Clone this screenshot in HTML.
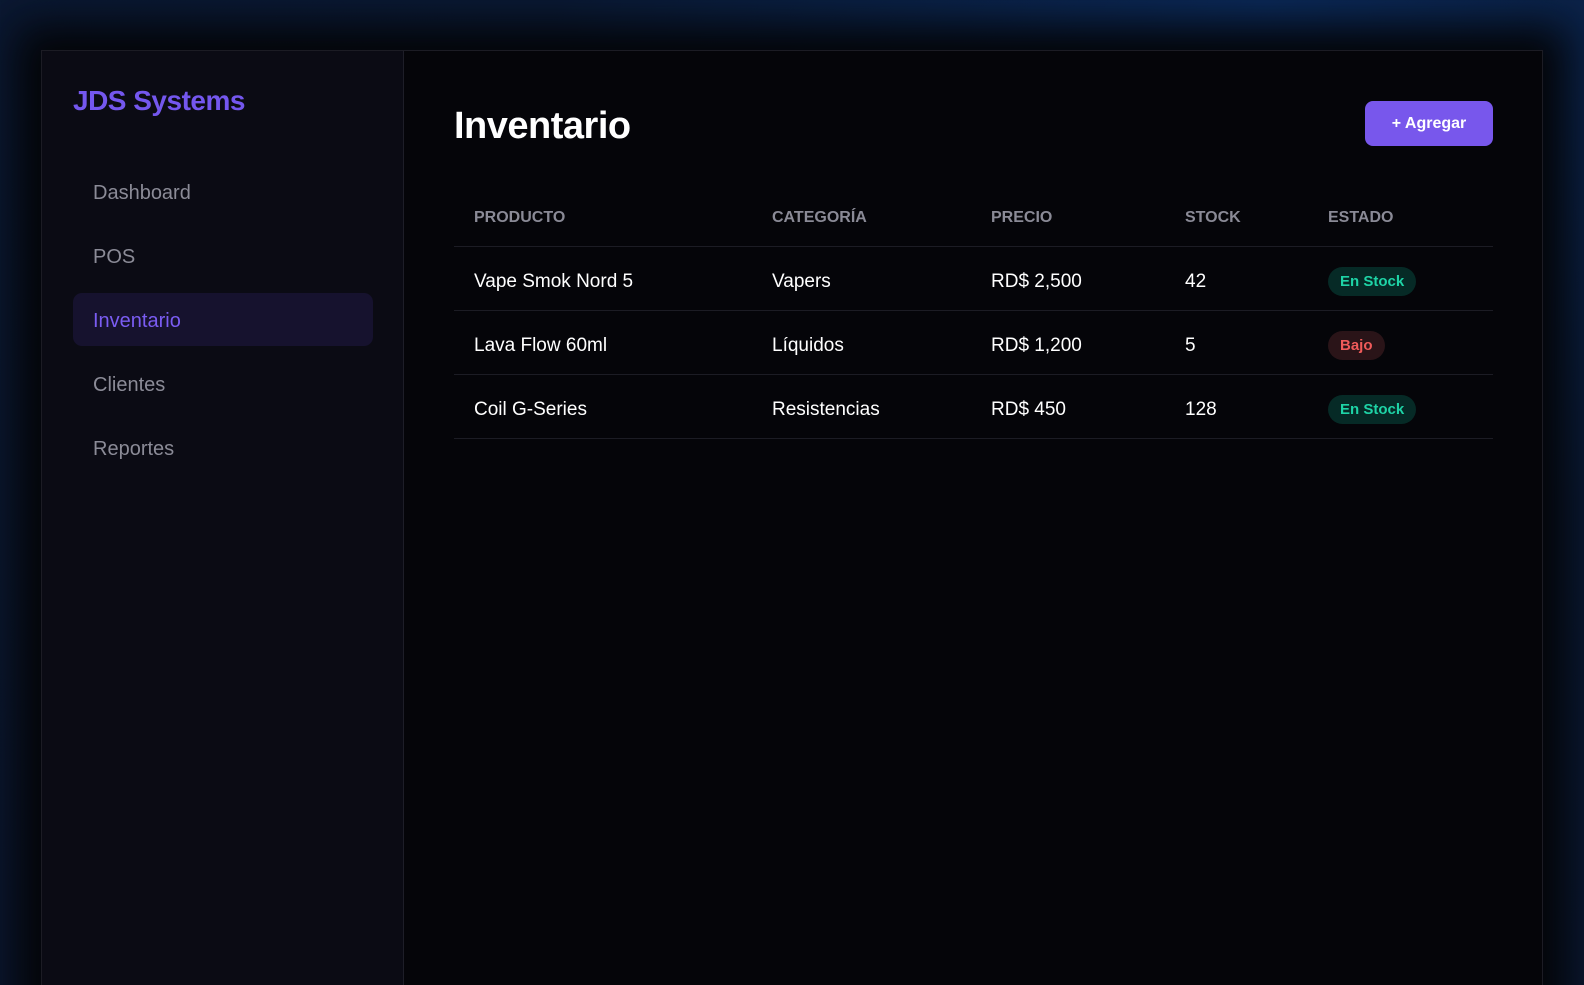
<!DOCTYPE html>
<html><head><meta charset="utf-8"><style>
*{margin:0;padding:0;box-sizing:border-box}
html,body{width:1584px;height:985px;overflow:hidden;font-family:"Liberation Sans",sans-serif}
body{background:radial-gradient(ellipse at 80% 0%,#0b2a5a 0%,#0a1a35 40%,#0b1730 100%);position:relative}
.card{position:absolute;left:41px;top:50px;width:1502px;height:960px;background:#050509;border:1px solid #1c1c24;box-shadow:0 0 40px 25px #040508}
.side{position:absolute;left:0;top:0;width:362px;height:100%;background:#0b0b14;border-right:1px solid #1e1e28}
.logo{position:absolute;left:31px;top:34px;font-size:28px;font-weight:bold;color:#7457ee;letter-spacing:-0.5px}
.nav{position:absolute;left:31px;width:300px;height:53px;padding-left:20px;line-height:56px;font-size:20px;color:#8b8b97;border-radius:9px}
.nav.a{background:#16122e;color:#7a5cf2}
h1{position:absolute;left:412px;top:54px;font-size:38px;font-weight:bold;color:#fff;letter-spacing:-0.5px}
.btn{position:absolute;left:1323px;top:50px;width:128px;height:45px;border-radius:8px;background:#7857ec;color:#fff;font-weight:bold;font-size:16px;text-align:center;line-height:45px}
.row{position:absolute;left:412px;width:1039px;height:64px;border-bottom:1px solid #1c1c24}
.row span{position:absolute;top:3px;line-height:64px;font-size:19px;color:#fff}
.row.h span{font-size:16px;font-weight:bold;color:#8a8a96}
.c1{left:20px}.c2{left:318px}.c3{left:537px}.c4{left:731px}.c5{left:874px}
.b{display:inline-block;line-height:29px;height:29px;padding:0 12px;border-radius:15px;font-size:15px;font-weight:bold;vertical-align:middle;font-style:normal}
.g{background:#062a26;color:#1ed3a6}.r{background:#2a1418;color:#ef5a5a}
</style></head><body>
<div class="card">
<div class="side">
<div class="logo">JDS Systems</div>
<div class="nav" style="top:114px">Dashboard</div>
<div class="nav" style="top:178px">POS</div>
<div class="nav a" style="top:242px">Inventario</div>
<div class="nav" style="top:306px">Clientes</div>
<div class="nav" style="top:370px">Reportes</div>
</div>
<h1>Inventario</h1>
<div class="btn">+ Agregar</div>
<div class="row h" style="top:132px"><span class="c1">PRODUCTO</span><span class="c2">CATEGORÍA</span><span class="c3">PRECIO</span><span class="c4">STOCK</span><span class="c5">ESTADO</span></div>
<div class="row" style="top:196px"><span class="c1">Vape Smok Nord 5</span><span class="c2">Vapers</span><span class="c3">RD$ 2,500</span><span class="c4">42</span><span class="c5"><i class="b g">En Stock</i></span></div>
<div class="row" style="top:260px"><span class="c1">Lava Flow 60ml</span><span class="c2">Líquidos</span><span class="c3">RD$ 1,200</span><span class="c4">5</span><span class="c5"><i class="b r">Bajo</i></span></div>
<div class="row" style="top:324px"><span class="c1">Coil G-Series</span><span class="c2">Resistencias</span><span class="c3">RD$ 450</span><span class="c4">128</span><span class="c5"><i class="b g">En Stock</i></span></div>
</div>
</body></html>
